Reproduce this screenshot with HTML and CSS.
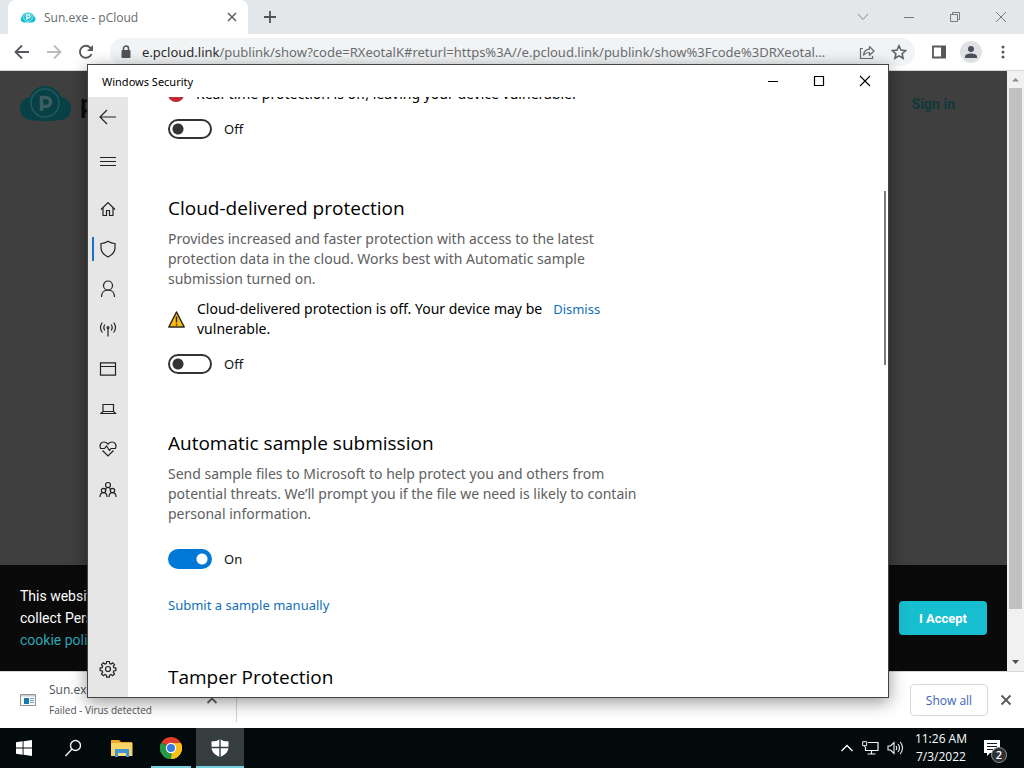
FILE: index.html
```html
<!DOCTYPE html>
<html lang="en">
<head>
<meta charset="utf-8">
<title>Sun.exe - pCloud</title>
<link rel="stylesheet" href="styles.css">
</head>
<body>
<div class="desktop">
  <div class="browser">
    <header class="tabstrip">
      <div class="tab">
        <svg class="favicon" width="16" height="12" viewBox="0 0 16 12"><path d="M3.600 11.500A3.400 3.400 0 0 1 2 5.400 6.200 5.400 0 0 1 13.900 5.200 3.400 3.400 0 0 1 12.600 11.500z" fill="#17bed0"/><circle cx="8" cy="6.200" r="4.300" fill="none" stroke="#b9eef3" stroke-width=".8"/><path d="M6.800 9V3.900h1.800a1.500 1.500 0 0 1 0 3H6.800" fill="none" stroke="#fff" stroke-width="1.200"/></svg>
        <span class="tab-title">Sun.exe - pCloud</span>
        <button class="icon-btn tab-close" aria-label="Close tab"><svg width="10" height="10" viewBox="0 0 10 10"><path d="M1 1l8 8M9 1L1 9" stroke="#5f6368" stroke-width="1.600"/></svg></button>
      </div>
      <button class="icon-btn new-tab" aria-label="New tab"><svg width="14" height="14" viewBox="0 0 14 14"><path d="M7 1v12M1 7h12" stroke="#4f5356" stroke-width="1.800"/></svg></button>
      <div class="caption">
        <button class="icon-btn cap-btn" aria-label="Search tabs"><svg width="12" height="12" viewBox="0 0 12 12"><path d="M1 3l5 5.500L11 3" fill="none" stroke="#85888b"/></svg></button>
        <button class="icon-btn cap-btn" aria-label="Minimize browser"><svg width="12" height="12" viewBox="0 0 12 12"><path d="M1 6.500h10" stroke="#777a7d"/></svg></button>
        <button class="icon-btn cap-btn" aria-label="Restore browser"><svg width="12" height="12" viewBox="0 0 12 12"><path d="M1.500 3.500h7v7h-7zM3.500 3.500v-2h7v7h-2" fill="none" stroke="#777a7d"/></svg></button>
        <button class="icon-btn cap-btn" aria-label="Close browser"><svg width="12" height="12" viewBox="0 0 12 12"><path d="M1 1l10 10M11 1L1 11" stroke="#777a7d"/></svg></button>
      </div>
    </header>
    <div class="toolbar">
      <button class="icon-btn nav-btn" aria-label="Back"><svg width="16" height="16" viewBox="0 0 16 16"><path d="M15 8H2M8 1.500L1.500 8 8 14.500" fill="none" stroke="#55585c" stroke-width="1.800"/></svg></button>
      <button class="icon-btn nav-btn" aria-label="Forward"><svg width="16" height="16" viewBox="0 0 16 16"><path d="M1 8h13M8 1.500L14.500 8 8 14.500" fill="none" stroke="#b9bbbd" stroke-width="1.800"/></svg></button>
      <button class="icon-btn nav-btn" aria-label="Reload"><svg width="16" height="16" viewBox="0 0 16 16"><path d="M13.500 10A6 6 0 1 1 12.400 3.800L13.500 5" fill="none" stroke="#55585c" stroke-width="1.900"/><path d="M15 1v6H9z" fill="#55585c"/></svg></button>
      <div class="omnibox">
        <svg width="10" height="14" viewBox="0 0 10 14"><path d="M2.500 6V3.500a2.500 2.500 0 0 1 5 0V6" fill="none" stroke="#505357" stroke-width="1.500"/><rect x="0.500" y="5" width="9" height="8" rx="1" fill="#505357"/></svg>
        <div class="url"><span class="host">e.pcloud.link</span>/publink/show?code=RXeotalK#returl=https%3A//e.pcloud.link/publink/show%3Fcode%3DRXeotal...</div>
        <button class="icon-btn omni-btn" aria-label="Share"><svg width="16" height="16" viewBox="0 0 16 16"><path d="M4 4.500H1.500v10h12V12" fill="none" stroke="#686b6f" stroke-width="1.200"/><path d="M4.500 11c.5-4 2.500-5.700 6-5.800V2.500L15 7l-4.500 4.300V8.500C7.800 8.500 6 9.300 4.500 11z" fill="none" stroke="#686b6f" stroke-width="1.200" stroke-linejoin="round"/></svg></button>
        <button class="icon-btn omni-btn" aria-label="Bookmark"><svg width="16" height="16" viewBox="0 0 16 16"><path d="M8 1.800l1.900 4.300 4.700.5-3.500 3.100 1 4.600L8 11.900l-4.100 2.400 1-4.600L1.400 6.600l4.700-.5z" fill="none" stroke="#5f6368" stroke-width="1.600"/></svg></button>
      </div>
      <div class="tools">
        <button class="icon-btn tool-btn" aria-label="Side panel"><svg width="14" height="14" viewBox="0 0 14 14"><path d="M1 1.500h12v11H1z" fill="none" stroke="#55585c" stroke-width="1.800"/><path d="M9 1h5v12H9z" fill="#55585c"/></svg></button>
        <button class="icon-btn tool-btn avatar" aria-label="Profile"><svg width="14" height="14" viewBox="0 0 14 14"><circle cx="7" cy="4" r="3" fill="#4a4f5a"/><path d="M1 13v-1.500C1 9.500 4 8.500 7 8.500s6 1 6 3V13z" fill="#4a4f5a"/></svg></button>
        <button class="icon-btn tool-btn" aria-label="Menu"><svg width="4" height="14" viewBox="0 0 4 14"><circle cx="2" cy="2" r="1.500" fill="#55585c"/><circle cx="2" cy="7" r="1.500" fill="#55585c"/><circle cx="2" cy="12" r="1.500" fill="#55585c"/></svg></button>
      </div>
    </div>
    <div class="viewport">
      <main class="site">
        <div class="site-head">
          <div class="brand">
            <svg width="51" height="36" viewBox="0 0 51 36"><path d="M10 34C4 33 0 28 0 22c0-6 4-10 10-11C12 4 18 0 25 0c8 0 14 5 16 11 6 1 10 5 10 11 0 7-4 11-10 12-10 1.500-21 1.500-31 0z" fill="#074146"/><circle cx="25" cy="17" r="14" fill="none" stroke="#23585d" stroke-width="1.500"/><path d="M21.500 25V11.500h4.500a4.500 4.500 0 0 1 0 9h-4.500" fill="none" stroke="#3b5e61" stroke-width="3.500"/></svg>
            <span class="brand-name">pCloud</span>
          </div>
          <a class="signin" href="#">Sign in</a>
        </div>
        <div class="cookies">
          <p class="cookie-text">This website uses cookies<br>collect Personal data<br><a href="#">cookie policy</a></p>
          <button class="accept">I Accept</button>
        </div>
      </main>
      <div class="scrollbar">
        <svg width="17" height="17" viewBox="0 0 17 17"><path d="M5 10.500h7L8.500 7z" fill="#8b8b8b"/></svg>
        <div class="thumb"></div>
        <svg width="17" height="17" viewBox="0 0 17 17"><path d="M5 6h7l-3.500 4z" fill="#505050"/></svg>
      </div>
    </div>
    <footer class="downloads">
      <div class="download">
        <svg width="16" height="12" viewBox="0 0 16 12"><path d="M.5.500h15v11H.5z" fill="#fafafa" stroke="#8c9196"/><path d="M1 1h14v1.500H1z" fill="#c9ced2"/><path d="M4 4h5v6H4z" fill="#1979ad"/><path d="M10 4.500h4M10 6.500h4M10 8.500h4" stroke="#69a3c0"/></svg>
        <div class="download-text"><div class="file">Sun.exe</div><div class="state">Failed - Virus detected</div></div>
        <button class="icon-btn" aria-label="Download options"><svg width="12" height="8" viewBox="0 0 12 8"><path d="M1.500 7L6 2.500 10.500 7" fill="none" stroke="#5f6368" stroke-width="1.800"/></svg></button>
      </div>
      <button class="show-all">Show all</button>
      <button class="icon-btn" aria-label="Close downloads"><svg width="12" height="12" viewBox="0 0 12 12"><path d="M1.500 1.500l9 9M10.500 1.500l-9 9" stroke="#55585c" stroke-width="1.800"/></svg></button>
    </footer>
  </div>

  <footer class="taskbar">
    <button class="task" aria-label="Start"><svg width="16" height="16" viewBox="0 0 16 16"><path d="M0 2.300L6.600 1.300V7.600H0zM7.500 1.200L16 0v7.600H7.500zM0 8.500h6.600v6.200L0 13.800zM7.500 8.500H16V16l-8.500-1.200z" fill="#fff"/></svg></button>
    <button class="task" aria-label="Search"><svg width="18" height="18" viewBox="0 0 18 18"><circle cx="11.500" cy="6.500" r="5" fill="none" stroke="#f4f4f4" stroke-width="1.400"/><path d="M8 10l-6.500 7" stroke="#f4f4f4" stroke-width="1.400"/></svg></button>
    <button class="task" aria-label="File Explorer"><svg width="22" height="18" viewBox="0 0 22 18"><path d="M0 1h8l2 2h11v4H0z" fill="#e9a92c"/><path d="M0 4h21.500v13H0z" fill="#fad566"/><path d="M4 10h14v8h-3v-4H7v4H4z" fill="#3f96d2"/><path d="M7 14h8v3H7z" fill="#fbe08a"/></svg></button>
    <button class="task running" aria-label="Google Chrome"><svg width="22" height="22" viewBox="0 0 22 22"><path d="M11 11L1.470 5.500A11 11 0 0 1 20.530 5.500z" fill="#e33b2e"/><path d="M11 11L20.530 5.500A11 11 0 0 1 11 22z" fill="#fbc116"/><path d="M11 11v11A11 11 0 0 1 1.470 5.500z" fill="#279847"/><path d="M11 6h9.800A11 11 0 0 1 11 22l4.300-8.500z" fill="#fbc116"/><path d="M1.470 5.500L6.700 13.500l5.300 2L11 22A11 11 0 0 1 1.470 5.500z" fill="#279847"/><circle cx="11" cy="11" r="5.200" fill="#fff"/><circle cx="11" cy="11" r="4" fill="#3b79e6"/></svg></button>
    <button class="task active" aria-label="Windows Security"><svg width="18" height="18" viewBox="0 0 18 18"><path d="M9 0c2 1.700 5 2.500 8.500 2.500V8c0 5-3.500 8-8.500 10C4 16 .5 13 .5 8V2.500C4 2.500 7 1.700 9 0z" fill="#fff"/><path d="M9 0v18M0 8.500h18" stroke="#353d3f" stroke-width="1.400"/></svg></button>
    <div class="tray">
      <button class="icon-btn" aria-label="Hidden icons"><svg width="14" height="8" viewBox="0 0 14 8"><path d="M1.500 7L7 1.500 12.500 7" fill="none" stroke="#fff" stroke-width="1.300"/></svg></button>
      <button class="icon-btn" aria-label="Network"><svg width="17" height="14" viewBox="0 0 17 14"><path d="M6 1.500h10v8H3.500V6M9.500 9.500V13M5.500 13h8" fill="none" stroke="#f4f4f4" stroke-width="1.200"/><path d="M.7.700h4v4h-4zM2.700 4.500V6" fill="none" stroke="#f4f4f4"/></svg></button>
      <button class="icon-btn" aria-label="Volume"><svg width="17" height="14" viewBox="0 0 17 14"><path d="M1 5h2.500L7 1.500v11L3.500 9H1z" fill="none" stroke="#f4f4f4" stroke-width="1.100"/><path d="M9 5q1.500 2 0 4M11 3q3 4 0 8M13.300 1q4.400 6 0 12" fill="none" stroke="#f4f4f4" stroke-width="1.100"/></svg></button>
      <div class="clock">11:26 AM<br>7/3/2022</div>
      <button class="icon-btn notify" aria-label="Notifications"><svg width="16" height="16" viewBox="0 0 16 16"><path d="M0 0h16v13H6l-3 3v-3H0z" fill="#fff"/><path d="M3 3.500h10M3 6.500h10M3 9.500h6" stroke="#16191a" stroke-width="1.200"/></svg><span class="badge">2</span></button>
    </div>
  </footer>

  <section class="window">
    <header class="titlebar">
      <span>Windows Security</span>
      <div class="win-caption">
        <button class="icon-btn win-btn" aria-label="Minimize"><svg width="12" height="12" viewBox="0 0 12 12"><path d="M1 6.500h10" stroke="#000"/></svg></button>
        <button class="icon-btn win-btn" aria-label="Maximize"><svg width="12" height="12" viewBox="0 0 12 12"><path d="M1.500 1.500h9v9h-9z" fill="none" stroke="#000" stroke-width="1.200"/></svg></button>
        <button class="icon-btn win-btn" aria-label="Close"><svg width="12" height="12" viewBox="0 0 12 12"><path d="M1 1l10 10M11 1L1 11" stroke="#000" stroke-width="1.100"/></svg></button>
      </div>
    </header>
    <div class="win-body">
      <nav class="rail">
        <button class="rail-btn rail-back" aria-label="Go back"><svg class="line" width="18" height="16" viewBox="0 0 18 16"><path d="M17 8H1.500M8 1L1 8l7 7"/></svg></button>
        <button class="rail-btn rail-menu" aria-label="Navigation"><svg class="line" width="18" height="12" viewBox="0 0 18 12"><path d="M1 2.500h16M1 6.500h16M1 10.500h16"/></svg></button>
        <button class="rail-btn" aria-label="Home"><svg class="line" width="16" height="16" viewBox="0 0 16 16"><path d="M1 8.500L8 1.500l7 7M3 7v7.500h3.500V9.500h3v5H13V7"/></svg></button>
        <button class="rail-btn selected" aria-label="Virus and threat protection"><svg class="line" width="18" height="18" viewBox="0 0 18 18"><path d="M9 1.300c2 1.400 4 2.200 7 2.200V8c0 4.500-3 7-7 9-4-2-7-4.500-7-9V3.500c3 0 5-.8 7-2.200z"/></svg></button>
        <button class="rail-btn" aria-label="Account protection"><svg class="line" width="16" height="18" viewBox="0 0 16 18"><circle cx="8" cy="5.500" r="4.500"/><path d="M1.500 17c0-4 2.500-7 6.500-7s6.500 3 6.500 7"/></svg></button>
        <button class="rail-btn" aria-label="Firewall"><svg class="line" width="18" height="16" viewBox="0 0 18 16"><circle cx="9" cy="6.500" r="1"/><path d="M9 7.500V15.500M5.800 3.500q-2 3 0 6M3.300 1.500q-3.600 5 0 10M12.200 3.500q2 3 0 6M14.700 1.500q3.600 5 0 10"/></svg></button>
        <button class="rail-btn" aria-label="App control"><svg class="line" width="18" height="14" viewBox="0 0 18 14"><path d="M1.500.800h15v12.400h-15zM1.500 4.500h15"/></svg></button>
        <button class="rail-btn" aria-label="Device security"><svg class="line" width="18" height="12" viewBox="0 0 18 12"><path d="M4 1.500h10.500v7H4zM4 8.500l-2 2h14.500l-2-2"/></svg></button>
        <button class="rail-btn" aria-label="Device performance"><svg class="line" width="18" height="16" viewBox="0 0 18 16"><path d="M1.500 7C0 3.500 2.500 1 5 1c2 0 3 1 4 2.200C10 2 11 1 13 1c2.500 0 5 2.500 3.500 6M3.500 9.500L9 15l5.500-5.500M1 7.500h4.500L7.500 5l3 4.500L12 7.500h5"/></svg></button>
        <button class="rail-btn" aria-label="Family options"><svg class="line" width="18" height="18" viewBox="0 0 18 18"><circle cx="9" cy="5" r="2.500"/><circle cx="4.500" cy="10.500" r="2.200"/><circle cx="13.500" cy="10.500" r="2.200"/><path d="M1 17c0-2.500 1-4.300 3.500-4.300S8 14.500 8 17M10 17c0-2.500 1-4.300 3.500-4.300S17 14.500 17 17M6.500 10.500q0-3 2.500-3t2.500 3"/></svg></button>
        <button class="rail-btn rail-end" aria-label="Settings"><svg class="line" width="18" height="18" viewBox="0 0 18 18"><circle cx="9" cy="9" r="2.500"/><path d="M7.700 1.500h2.600l.4 2 1.300.6 1.700-1.200 1.800 1.800-1.200 1.700.6 1.300 2 .4v2.400l-2 .4-.6 1.300 1.200 1.700-1.800 1.800-1.700-1.200-1.300.6-.4 2H7.700l-.4-2-1.300-.6-1.700 1.200-1.800-1.800 1.200-1.700-.6-1.300-2-.4V8.100l2-.4.6-1.300-1.200-1.700 1.800-1.800L6 4.100l1.300-.6z"/></svg></button>
      </nav>
      <div class="pane">
        <div class="content">
          <div class="alert">
            <svg width="16" height="16" viewBox="0 0 16 16"><circle cx="8" cy="8" r="8" fill="#c42532"/><path d="M5 5l6 6M11 5l-6 6" stroke="#fff" stroke-width="1.300"/></svg>
            <p>Real-time protection is off, leaving your device vulnerable.</p>
          </div>
          <label class="switch"><input type="checkbox" role="switch">Off</label>

          <h2>Cloud-delivered protection</h2>
          <p class="desc">Provides increased and faster protection with access to the latest<br>protection data in the cloud. Works best with Automatic sample<br>submission turned on.</p>
          <div class="alert">
            <svg width="17" height="17" viewBox="0 0 17 17"><path d="M8.500 1L16.200 16H.8z" fill="#f9bd0b" stroke="#2c2820" stroke-width="1.500" stroke-linejoin="round"/><path d="M8.500 5.500v6M8.500 12.800v1.700" stroke="#2c2820" stroke-width="1.400"/></svg>
            <p>Cloud-delivered protection is off. Your device may be<br>vulnerable.</p>
            <a class="dismiss" href="#">Dismiss</a>
          </div>
          <label class="switch"><input type="checkbox" role="switch">Off</label>

          <h2>Automatic sample submission</h2>
          <p class="desc wide-gap">Send sample files to Microsoft to help protect you and others from<br>potential threats. We’ll prompt you if the file we need is likely to contain<br>personal information.</p>
          <label class="switch"><input type="checkbox" role="switch" checked>On</label>
          <a class="sample-link" href="#">Submit a sample manually</a>

          <h2 class="tight">Tamper Protection</h2>
        </div>
        <div class="pane-thumb"></div>
      </div>
    </div>
  </section>
</div>
</body>
</html>
```

FILE: styles.css
```css
* { box-sizing: border-box; }
body { margin: 0; font-family: "Noto Sans", "Open Sans", sans-serif; font-size: 14px; color: #111; }
p, h2 { margin: 0; }
button { font: inherit; border: 0; padding: 0; background: none; color: inherit; }
a { text-decoration: none; }
svg { display: block; flex: none; }
.icon-btn { display: flex; align-items: center; justify-content: center; flex: none; }

.desktop { position: relative; display: flex; flex-direction: column; height: 100vh; overflow: hidden; }
.browser { flex: 1; display: flex; flex-direction: column; min-height: 0; background: #fff; }

/* Browser tabs */
.tabstrip { display: flex; align-items: center; height: 34px; padding-left: 8px; background: #e4e7ea; }
.tab { display: flex; align-items: center; gap: 8px; width: 240px; height: 34px; padding: 0 11px 0 12px; background: #fff; border-radius: 8px 8px 0 0; }
.tab-title { flex: 1; font-family: "Open Sans", sans-serif; font-size: 12px; color: #686b6e; }
.new-tab { width: 28px; height: 28px; margin-left: 8px; }
.caption { display: flex; margin-left: auto; height: 28px; }
.cap-btn { width: 46px; }

/* Browser toolbar */
.toolbar { display: flex; align-items: center; height: 37px; padding-left: 6px; border-bottom: 1px solid #d5d7d9; }
.nav-btn { width: 32px; height: 32px; }
.omnibox { flex: 1; display: flex; align-items: center; min-width: 0; height: 28px; margin-left: 8px; padding: 0 0 0 11px; border-radius: 14px; background: #f1f3f4; }
.url { flex: 1; min-width: 0; margin-left: 11px; overflow: hidden; white-space: nowrap; font-size: 13px; color: #6b6e72; }
.host { color: #2b2d30; }
.omni-btn { width: 32px; height: 28px; }
.tools { display: flex; align-items: center; gap: 10px; padding: 0 10px 0 13px; }
.tool-btn { width: 22px; height: 22px; }
.avatar { border-radius: 11px; background: #dfe1e5; }

/* Web page */
.viewport { flex: 1; display: flex; min-height: 0; }
.site { flex: 1; display: flex; flex-direction: column; justify-content: space-between; background: #3f3f3f; font-family: Roboto, sans-serif; }
.site-head { display: flex; justify-content: space-between; align-items: center; padding: 15px 52px 0 20px; }
.brand { display: flex; align-items: center; gap: 9px; }
.brand-name { font-size: 26px; font-weight: 700; color: #0c0c0c; }
.signin { font-size: 14px; font-weight: 700; color: #11383a; }
.cookies { display: flex; justify-content: space-between; align-items: center; height: 106px; padding: 0 20px; background: #0a0a0a; }
.cookie-text { font-size: 14px; line-height: 22px; color: #fff; }
.cookie-text a { color: #2ea6b3; }
.accept { width: 88px; height: 34px; border-radius: 4px; background: #17bed0; color: #fff; font-size: 13px; font-weight: 700; }
.scrollbar { display: flex; flex-direction: column; width: 17px; background: #f1f1f1; }
.thumb { height: 521px; margin: 0 2px; background: #c1c1c1; }
.scrollbar svg:last-child { margin-top: auto; }

/* Downloads shelf */
.downloads { display: flex; align-items: center; height: 57px; padding-right: 12px; border-top: 1px solid #d5d7d9; font-family: "Open Sans", sans-serif; }
.download { display: flex; align-items: center; width: 237px; height: 44px; padding: 0 18px 0 20px; border-right: 1px solid #d0d2d4; }
.download-text { flex: 1; margin-left: 13px; }
.file { font-size: 12px; line-height: 20px; color: #505356; }
.state { font-size: 10px; line-height: 20px; color: #505356; }
.show-all { width: 78px; height: 32px; margin: 0 12px 0 auto; border: 1px solid #d5d8dc; border-radius: 4px; font-size: 12px; color: #3a63b8; }

/* Taskbar */
.taskbar { display: flex; height: 40px; background: #020a0c; color: #fff; font-family: "Open Sans", sans-serif; }
.task { display: flex; align-items: center; justify-content: center; width: 48px; margin-right: 1px; }
.running { background: linear-gradient(#76cfdc, #76cfdc) center bottom / 40px 2px no-repeat; }
.active { background: #353d3f; border-bottom: 2px solid #76cfdc; border-top: 2px solid #353d3f; }
.tray { display: flex; align-items: center; margin-left: auto; gap: 8px; padding-right: 24px; }
.clock { margin: 0 9px 0 3px; font-size: 12px; line-height: 18px; text-align: center; }
.notify { position: relative; }
.badge { position: absolute; left: 7px; top: 7px; width: 16px; height: 16px; border: 1px solid #8a8f90; border-radius: 8px; background: #2c3133; font-size: 11px; line-height: 14px; font-weight: 600; }

/* Security window */
.window { position: absolute; left: 87px; top: 64px; right: 135px; bottom: 70px; display: flex; flex-direction: column; border: 1px solid #444; background: #fff; box-shadow: 0 4px 16px rgba(0, 0, 0, .42); }
.titlebar { display: flex; align-items: center; justify-content: space-between; height: 32px; padding-left: 14px; font-size: 11px; color: #000; }
.win-caption { display: flex; height: 32px; }
.win-btn { width: 46px; }
.win-body { flex: 1; display: flex; min-height: 0; }
.rail { display: flex; flex-direction: column; width: 40px; padding-bottom: 8px; background: #e6e6e6; }
.rail-btn { display: flex; align-items: center; justify-content: center; height: 40px; }
.rail-back { margin-bottom: 4px; }
.rail-menu { margin-bottom: 8px; }
.rail-end { margin-top: auto; }
.line { fill: none; stroke: #222; stroke-width: 1.2; }
.selected { background: linear-gradient(#1a73c0, #1a73c0) 4px center / 2px 24px no-repeat; }
.pane { flex: 1; display: flex; min-width: 0; overflow: hidden; }
.content { flex: 1; margin-top: -13px; padding-left: 40px; }
.alert { display: flex; align-items: center; line-height: 20px; color: #000; }
.alert p { margin-left: 12px; }
.dismiss { align-self: flex-start; margin-left: 11px; font-size: 13px; }
a.dismiss, .sample-link { color: #1070b8; }
.switch { display: flex; align-items: center; gap: 12px; height: 20px; margin-top: 15px; font-size: 13px; }
.switch input { appearance: none; flex: none; width: 44px; height: 20px; margin: 0; border: 2px solid #333; border-radius: 10px; background: radial-gradient(circle at 8px 8px, #333 5px, transparent 6px); }
.switch input:checked { border-color: #0078d7; background: radial-gradient(circle at 32px 8px, #fff 5px, #0078d7 6px); }
h2 { margin-top: 55px; font-family: "Open Sans", sans-serif; font-size: 19px; line-height: 28px; font-weight: 400; color: #000; }
.desc { margin: 7px 0 10px; line-height: 20px; color: #606060; }
.wide-gap { margin-bottom: 25px; }
.sample-link { display: block; margin-top: 26px; font-size: 13px; line-height: 20px; }
h2.tight { margin-top: 48px; }
.pane-thumb { width: 2px; height: 174px; margin: 94px 2px 0 0; background: #7a7a7a; }
```
